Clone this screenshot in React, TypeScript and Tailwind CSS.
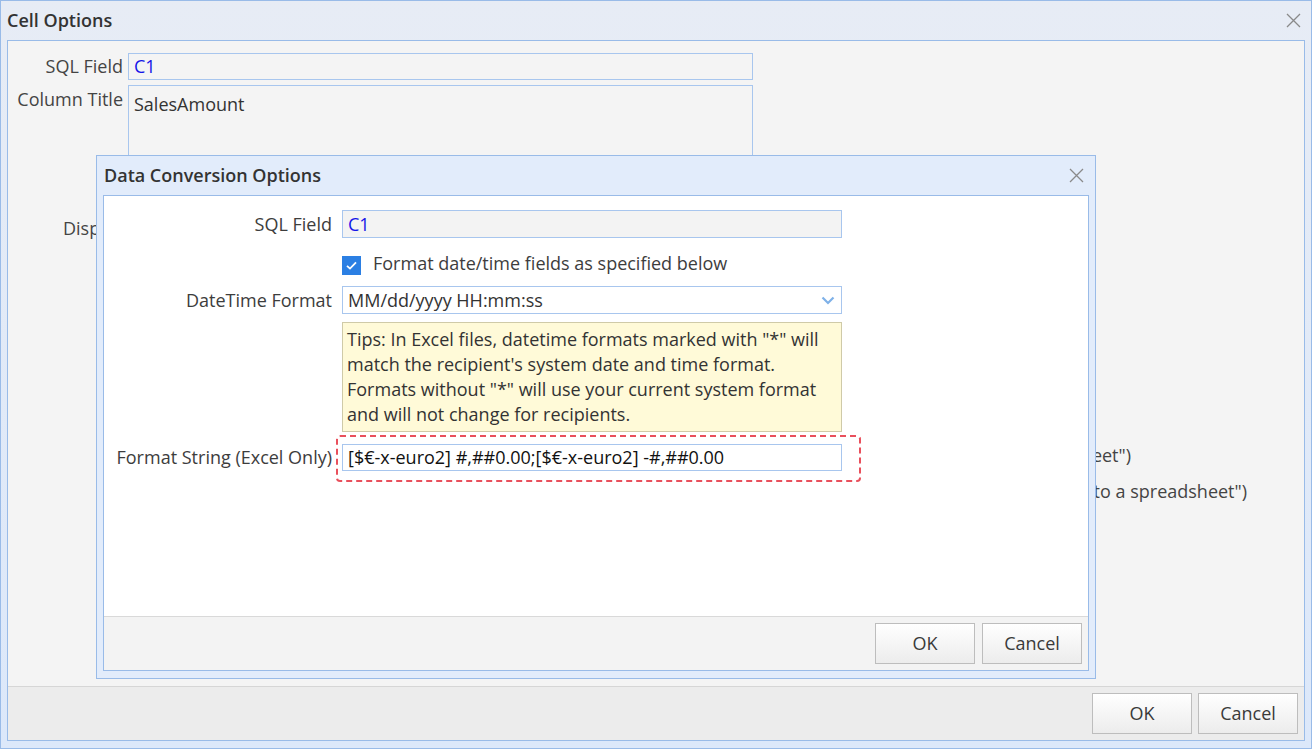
import React from "react";

function CloseIcon() {
  return (
    <svg width="15" height="15" viewBox="0 0 15 15" className="text-[#8a8a8a]">
      <path d="M1 1L14 14M14 1L1 14" stroke="currentColor" strokeWidth="1.3" />
    </svg>
  );
}

function Btn({ children }: { children: React.ReactNode }) {
  return (
    <button className="h-[41px] w-[100px] border border-[#bdbdbd] bg-gradient-to-b from-white to-[#ececec] text-[18px] text-[#3a3a3a]">
      {children}
    </button>
  );
}

function ConversionDialog() {
  return (
    <div className="absolute left-[95px] top-[154px] flex h-[524px] w-[1000px] flex-col border border-[#99bbe8] bg-[#e2ecfb]">
      <div className="flex h-[39px] shrink-0 items-center justify-between pl-[7px] pr-[11px]">
        <span className="text-[18px] font-semibold text-[#333]">Data Conversion Options</span>
        <CloseIcon />
      </div>
      <div className="mx-[6px] mb-[7px] flex flex-1 flex-col border border-[#99bbe8] bg-white">
        <div className="flex-1 pt-[14px] text-[18px] text-[#3d3d3d]">
          <div className="flex items-center gap-[10px]">
            <div className="w-[228px] text-right">SQL Field</div>
            <div className="flex h-[28px] w-[500px] items-center border border-[#a8c6ee] bg-[#f3f3f3] px-[5px] text-[#1515e8]">
              C1
            </div>
          </div>
          <div className="mt-[18px] flex h-[19px] items-center gap-[12px] pl-[238px]">
            <div className="flex h-[19px] w-[19px] items-center justify-center bg-[#2b7fe3]">
              <svg width="13" height="13" viewBox="0 0 13 13">
                <path d="M2 6.8L5 9.6L11 3.4" fill="none" stroke="white" strokeWidth="1.8" />
              </svg>
            </div>
            <span className="-mt-[5px]">Format date/time fields as specified below</span>
          </div>
          <div className="mt-[11px] flex items-center gap-[10px]">
            <div className="w-[228px] text-right">DateTime Format</div>
            <div className="flex h-[28px] w-[500px] items-center justify-between border border-[#a8c6ee] bg-white pl-[5px] pr-[6px] text-[#333]">
              <span>MM/dd/yyyy HH:mm:ss</span>
              <svg width="14" height="9" viewBox="0 0 14 9">
                <path d="M1.5 1.5L7 7L12.5 1.5" fill="none" stroke="#7fb1e8" strokeWidth="2.2" />
              </svg>
            </div>
          </div>
          <div className="ml-[238px] mt-[8px] h-[110px] w-[500px] whitespace-nowrap border border-[#cfcaa8] bg-[#fffad8] px-[4px] py-[4px] leading-[25px] text-[#333]">
            Tips: In Excel files, datetime formats marked with "*" will
            <br />
            match the recipient's system date and time format.
            <br />
            Formats without "*" will use your current system format
            <br />
            and will not change for recipients.
          </div>
          <div className="mt-[12px] flex items-center gap-[10px]">
            <div className="w-[228px] text-right">Format String (Excel Only)</div>
            <div className="relative">
              <div className="flex h-[27px] w-[500px] items-center border border-[#a8c6ee] bg-white px-[5px] text-[#111]">
                [$€-x-euro2] #,##0.00;[$€-x-euro2] -#,##0.00
              </div>
              <div className="absolute -bottom-[11px] -left-[6px] -right-[19px] -top-[9px] rounded-[4px] border-2 border-dashed border-[#e9505c]" />
            </div>
          </div>
        </div>
        <div className="flex h-[54px] shrink-0 justify-end gap-[7px] border-t border-[#d9d9d9] bg-[#f3f3f3] pr-[6px] pt-[6px]">
          <Btn>OK</Btn>
          <Btn>Cancel</Btn>
        </div>
      </div>
    </div>
  );
}

export default function App() {
  return (
    <div className="relative flex h-[749px] w-[1312px] flex-col border border-[#99bbe8] bg-gradient-to-b from-[#e7ecf5] to-[#dce8fa] font-['Open_Sans',sans-serif]">
      <div className="flex h-[39px] shrink-0 items-center justify-between pl-[6px] pr-[10px]">
        <span className="text-[18px] font-semibold text-[#333]">Cell Options</span>
        <CloseIcon />
      </div>
      <div className="mx-[6px] mb-[7px] flex flex-1 flex-col border border-[#99bbe8] bg-[#f4f4f4]">
        <div className="flex-1 pt-[12px] text-[18px] text-[#444]">
          <div className="flex items-center gap-[5px]">
            <div className="w-[115px] text-right">SQL Field</div>
            <div className="flex h-[27px] w-[625px] items-center border border-[#a8c6ee] bg-[#f4f4f4] px-[5px] text-[#1515e8]">
              C1
            </div>
          </div>
          <div className="mt-[5px] flex items-start gap-[5px]">
            <div className="w-[115px] pt-[1px] text-right">Column Title</div>
            <div className="h-[120px] w-[625px] border border-[#a8c6ee] bg-[#f4f4f4] px-[5px] pt-[5px] text-[#333]">
              SalesAmount
            </div>
          </div>
          <div className="mt-[10px] pl-[55px]">Display Format</div>
          <div className="mt-[200px] w-[1123px] text-right">to a spreadsheet")</div>
          <div className="mt-[9px] w-[1239px] text-right">exported to a spreadsheet")</div>
        </div>
        <div className="flex h-[54px] shrink-0 justify-end gap-[6px] border-t border-[#d6d6d6] bg-[#ececec] pr-[6px] pt-[6px]">
          <Btn>OK</Btn>
          <Btn>Cancel</Btn>
        </div>
      </div>
      <ConversionDialog />
    </div>
  );
}
